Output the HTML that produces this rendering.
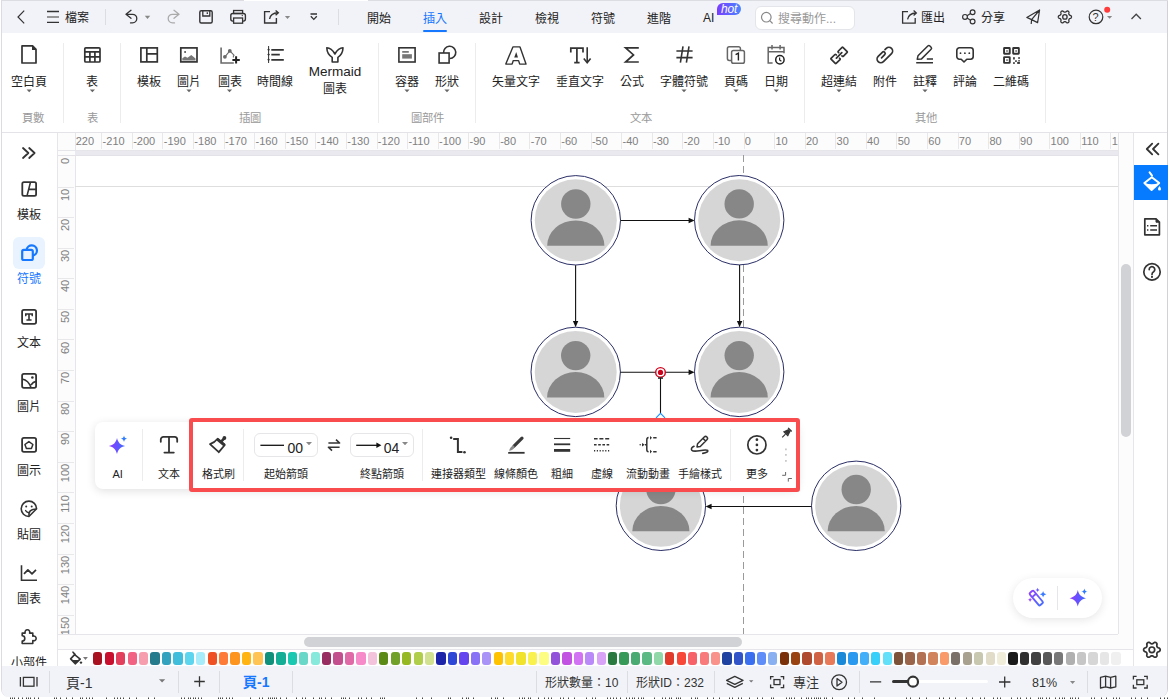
<!DOCTYPE html><html lang="zh-TW"><head><meta charset="utf-8"><style>
*{box-sizing:border-box;}
html,body{margin:0;padding:0;}
body{width:1169px;height:699px;overflow:hidden;position:relative;background:#fff;font-family:"Liberation Sans",sans-serif;color:#333;font-size:12px;}
.a{position:absolute;}
.t{position:absolute;white-space:nowrap;line-height:14px;text-align:center;width:120px;}
.l{position:absolute;white-space:nowrap;line-height:14px;}
svg.s{position:absolute;left:0;top:0;overflow:visible;}
</style></head><body>
<svg class="s" width="1169" height="699"><path d="M10 697.6h1v1.4h-1zM12 697.6h1v1.4h-1zM14 697.6h1v1.4h-1zM18 697.6h1v1.4h-1zM22 697.6h1v1.4h-1zM26 697.6h1v1.4h-1zM28 697.6h1v1.4h-1zM30 697.6h1v1.4h-1zM34 697.6h1v1.4h-1zM38 697.6h1v1.4h-1zM54 697.6h1v1.4h-1zM56 697.6h1v1.4h-1zM60 697.6h1v1.4h-1zM66 697.6h1v1.4h-1zM72 697.6h1v1.4h-1zM80 697.6h1v1.4h-1zM82 697.6h1v1.4h-1zM86 697.6h1v1.4h-1zM89 697.6h1v1.4h-1zM92 697.6h1v1.4h-1zM106 697.6h1v1.4h-1zM114 697.6h1v1.4h-1zM117 697.6h1v1.4h-1zM120 697.6h1v1.4h-1zM123 697.6h1v1.4h-1zM129 697.6h1v1.4h-1zM136 697.6h1v1.4h-1zM148 697.6h1v1.4h-1zM154 697.6h1v1.4h-1zM181 697.6h1v1.4h-1zM184 697.6h1v1.4h-1zM188 697.6h1v1.4h-1zM190 697.6h1v1.4h-1zM193 697.6h1v1.4h-1zM195 697.6h1v1.4h-1zM198 697.6h1v1.4h-1zM201 697.6h1v1.4h-1zM218 697.6h1v1.4h-1zM220 697.6h1v1.4h-1zM222 697.6h1v1.4h-1zM226 697.6h1v1.4h-1zM229 697.6h1v1.4h-1zM232 697.6h1v1.4h-1zM250 697.6h1v1.4h-1zM259 697.6h1v1.4h-1zM262 697.6h1v1.4h-1zM268 697.6h1v1.4h-1zM270 697.6h1v1.4h-1zM272 697.6h1v1.4h-1zM274 697.6h1v1.4h-1zM276 697.6h1v1.4h-1zM280 697.6h1v1.4h-1zM286 697.6h1v1.4h-1zM296 697.6h1v1.4h-1zM302 697.6h1v1.4h-1zM305 697.6h1v1.4h-1zM313 697.6h1v1.4h-1zM319 697.6h1v1.4h-1zM321 697.6h1v1.4h-1zM325 697.6h1v1.4h-1zM331 697.6h1v1.4h-1zM341 697.6h1v1.4h-1zM343 697.6h1v1.4h-1zM345 697.6h1v1.4h-1zM349 697.6h1v1.4h-1zM358 697.6h1v1.4h-1zM361 697.6h1v1.4h-1zM366 697.6h1v1.4h-1zM371 697.6h1v1.4h-1zM380 697.6h1v1.4h-1zM382 697.6h1v1.4h-1zM384 697.6h1v1.4h-1zM416 697.6h1v1.4h-1zM422 697.6h1v1.4h-1zM431 697.6h1v1.4h-1zM448 697.6h1v1.4h-1zM450 697.6h1v1.4h-1zM462 697.6h1v1.4h-1zM466 697.6h1v1.4h-1zM468 697.6h1v1.4h-1zM473 697.6h1v1.4h-1zM491 697.6h1v1.4h-1zM495 697.6h1v1.4h-1zM497 697.6h1v1.4h-1zM503 697.6h1v1.4h-1zM519 697.6h1v1.4h-1zM522 697.6h1v1.4h-1zM524 697.6h1v1.4h-1zM528 697.6h1v1.4h-1zM530 697.6h1v1.4h-1zM538 697.6h1v1.4h-1zM544 697.6h1v1.4h-1zM548 697.6h1v1.4h-1zM551 697.6h1v1.4h-1zM560 697.6h1v1.4h-1zM563 697.6h1v1.4h-1zM568 697.6h1v1.4h-1zM574 697.6h1v1.4h-1zM586 697.6h1v1.4h-1zM592 697.6h1v1.4h-1zM595 697.6h1v1.4h-1zM607 697.6h1v1.4h-1zM610 697.6h1v1.4h-1zM613 697.6h1v1.4h-1zM616 697.6h1v1.4h-1zM620 697.6h1v1.4h-1zM626 697.6h1v1.4h-1zM629 697.6h1v1.4h-1zM632 697.6h1v1.4h-1zM634 697.6h1v1.4h-1zM638 697.6h1v1.4h-1zM641 697.6h1v1.4h-1zM643 697.6h1v1.4h-1zM654 697.6h1v1.4h-1zM662 697.6h1v1.4h-1zM665 697.6h1v1.4h-1zM669 697.6h1v1.4h-1zM671 697.6h1v1.4h-1zM676 697.6h1v1.4h-1zM678 697.6h1v1.4h-1zM680 697.6h1v1.4h-1zM691 697.6h1v1.4h-1zM695 697.6h1v1.4h-1zM697 697.6h1v1.4h-1zM707 697.6h1v1.4h-1zM713 697.6h1v1.4h-1zM719 697.6h1v1.4h-1zM729 697.6h1v1.4h-1zM732 697.6h1v1.4h-1zM738 697.6h1v1.4h-1zM741 697.6h1v1.4h-1zM749 697.6h1v1.4h-1zM757 697.6h1v1.4h-1zM762 697.6h1v1.4h-1zM771 697.6h1v1.4h-1zM773 697.6h1v1.4h-1zM786 697.6h1v1.4h-1zM789 697.6h1v1.4h-1zM791 697.6h1v1.4h-1zM794 697.6h1v1.4h-1zM801 697.6h1v1.4h-1zM806 697.6h1v1.4h-1zM808 697.6h1v1.4h-1zM811 697.6h1v1.4h-1zM814 697.6h1v1.4h-1zM816 697.6h1v1.4h-1zM818 697.6h1v1.4h-1zM820 697.6h1v1.4h-1zM824 697.6h1v1.4h-1zM826 697.6h1v1.4h-1zM832 697.6h1v1.4h-1zM848 697.6h1v1.4h-1zM854 697.6h1v1.4h-1zM862 697.6h1v1.4h-1zM874 697.6h1v1.4h-1zM906 697.6h1v1.4h-1zM910 697.6h1v1.4h-1zM919 697.6h1v1.4h-1zM926 697.6h1v1.4h-1zM939 697.6h1v1.4h-1zM943 697.6h1v1.4h-1zM949 697.6h1v1.4h-1zM955 697.6h1v1.4h-1zM966 697.6h1v1.4h-1zM972 697.6h1v1.4h-1zM980 697.6h1v1.4h-1zM984 697.6h1v1.4h-1zM993 697.6h1v1.4h-1zM997 697.6h1v1.4h-1zM1000 697.6h1v1.4h-1zM1011 697.6h1v1.4h-1zM1017 697.6h1v1.4h-1zM1020 697.6h1v1.4h-1zM1026 697.6h1v1.4h-1zM1030 697.6h1v1.4h-1zM1038 697.6h1v1.4h-1zM1040 697.6h1v1.4h-1zM1042 697.6h1v1.4h-1zM1046 697.6h1v1.4h-1zM1049 697.6h1v1.4h-1zM1055 697.6h1v1.4h-1zM1059 697.6h1v1.4h-1zM1062 697.6h1v1.4h-1zM1064 697.6h1v1.4h-1zM1070 697.6h1v1.4h-1zM1072 697.6h1v1.4h-1zM1075 697.6h1v1.4h-1zM1078 697.6h1v1.4h-1zM1091 697.6h1v1.4h-1zM1094 697.6h1v1.4h-1zM1101 697.6h1v1.4h-1zM1106 697.6h1v1.4h-1zM1113 697.6h1v1.4h-1zM1116 697.6h1v1.4h-1zM1119 697.6h1v1.4h-1zM1131 697.6h1v1.4h-1zM1135 697.6h1v1.4h-1zM1141 697.6h1v1.4h-1zM1147 697.6h1v1.4h-1zM1160 697.6h1v1.4h-1zM1164 697.6h1v1.4h-1zM1167 697.6h1v1.4h-1z" fill="#444"/></svg>
<div class="a" style="left:1px;top:0;width:1167px;height:697px;background:#fff;border-radius:0 0 8px 8px;border-left:1px solid #dcdce0;border-right:1px solid #d2d2d6;"></div>
<div class="a" style="left:1px;top:0px;width:243px;height:1px;background:#dcdde2;"></div>
<div class="a" style="left:368px;top:0px;width:800px;height:1px;background:#dcdde2;"></div>
<div class="a" style="left:2px;top:1px;width:1165px;height:32px;background:#f2f3f8;"></div>
<div class="a" style="left:2px;top:132px;width:1165px;height:1px;background:#e4e4e8;"></div>
<div class="l" style="left:65.00px;top:11.00px;font-size:12px;color:#222;font-weight:normal;">檔案</div>
<div class="a" style="left:105px;top:9px;width:1px;height:16px;background:#dcdde2;"></div>
<div class="a" style="left:338px;top:9px;width:1px;height:16px;background:#dcdde2;"></div>
<div class="t" style="left:319.20px;top:11.80px;font-size:12px;color:#222;font-weight:normal;">開始</div>
<div class="t" style="left:375.00px;top:11.80px;font-size:12px;color:#1677ff;font-weight:normal;">插入</div>
<div class="t" style="left:430.80px;top:11.80px;font-size:12px;color:#222;font-weight:normal;">設計</div>
<div class="t" style="left:486.50px;top:11.80px;font-size:12px;color:#222;font-weight:normal;">檢視</div>
<div class="t" style="left:543.00px;top:11.80px;font-size:12px;color:#222;font-weight:normal;">符號</div>
<div class="t" style="left:598.70px;top:11.80px;font-size:12px;color:#222;font-weight:normal;">進階</div>
<div class="a" style="left:423px;top:30px;width:24px;height:2px;background:#1677ff;border-radius:1px;"></div>
<div class="l" style="left:703.00px;top:10.90px;font-size:12px;color:#222;font-weight:normal;">AI</div>
<div class="a" style="left:717px;top:2.8px;width:24.2px;height:12.2px;border-radius:6px 6px 6px 0;background:linear-gradient(90deg,#7a3cff,#4a86ff);color:#fff;font-size:12px;line-height:12px;font-style:italic;text-align:center;letter-spacing:-0.2px;">hot</div>
<div class="a" style="left:755px;top:6px;width:100px;height:24px;border:1px solid #e4e5ea;border-radius:6px;background:#fff;"></div>
<div class="l" style="left:778.00px;top:12.30px;font-size:12px;color:#999;font-weight:normal;">搜尋動作...</div>
<div class="l" style="left:921.00px;top:11.40px;font-size:12px;color:#222;font-weight:normal;">匯出</div>
<div class="l" style="left:981.00px;top:11.40px;font-size:12px;color:#222;font-weight:normal;">分享</div>
<div class="l" style="left:1092.60px;top:10.40px;font-size:11px;color:#333;font-weight:normal;">?</div>
<div class="t" style="left:-30.80px;top:74.50px;font-size:12px;color:#222;font-weight:normal;">空白頁</div>
<div class="t" style="left:32.40px;top:74.50px;font-size:12px;color:#222;font-weight:normal;">表</div>
<div class="t" style="left:89.00px;top:74.50px;font-size:12px;color:#222;font-weight:normal;">模板</div>
<div class="t" style="left:129.00px;top:74.50px;font-size:12px;color:#222;font-weight:normal;">圖片</div>
<div class="t" style="left:169.50px;top:74.50px;font-size:12px;color:#222;font-weight:normal;">圖表</div>
<div class="t" style="left:215.00px;top:74.50px;font-size:12px;color:#222;font-weight:normal;">時間線</div>
<div class="t" style="left:347.00px;top:74.50px;font-size:12px;color:#222;font-weight:normal;">容器</div>
<div class="t" style="left:387.00px;top:74.50px;font-size:12px;color:#222;font-weight:normal;">形狀</div>
<div class="t" style="left:456.00px;top:74.50px;font-size:12px;color:#222;font-weight:normal;">矢量文字</div>
<div class="t" style="left:520.00px;top:74.50px;font-size:12px;color:#222;font-weight:normal;">垂直文字</div>
<div class="t" style="left:572.00px;top:74.50px;font-size:12px;color:#222;font-weight:normal;">公式</div>
<div class="t" style="left:624.00px;top:74.50px;font-size:12px;color:#222;font-weight:normal;">字體符號</div>
<div class="t" style="left:676.00px;top:74.50px;font-size:12px;color:#222;font-weight:normal;">頁碼</div>
<div class="t" style="left:716.30px;top:74.50px;font-size:12px;color:#222;font-weight:normal;">日期</div>
<div class="t" style="left:779.00px;top:74.50px;font-size:12px;color:#222;font-weight:normal;">超連結</div>
<div class="t" style="left:825.00px;top:74.50px;font-size:12px;color:#222;font-weight:normal;">附件</div>
<div class="t" style="left:865.00px;top:74.50px;font-size:12px;color:#222;font-weight:normal;">註釋</div>
<div class="t" style="left:905.00px;top:74.50px;font-size:12px;color:#222;font-weight:normal;">評論</div>
<div class="t" style="left:951.00px;top:74.50px;font-size:12px;color:#222;font-weight:normal;">二維碼</div>
<div class="t" style="left:275.00px;top:64.50px;font-size:13.5px;color:#222;font-weight:normal;">Mermaid</div>
<div class="t" style="left:275.00px;top:81.50px;font-size:12px;color:#222;font-weight:normal;">圖表</div>
<div class="t" style="left:-27.20px;top:111.00px;font-size:11.3px;color:#999;font-weight:normal;">頁數</div>
<div class="t" style="left:32.40px;top:111.00px;font-size:11.3px;color:#999;font-weight:normal;">表</div>
<div class="t" style="left:190.00px;top:111.00px;font-size:11.3px;color:#999;font-weight:normal;">插圖</div>
<div class="t" style="left:367.50px;top:111.00px;font-size:11.3px;color:#999;font-weight:normal;">圖部件</div>
<div class="t" style="left:581.00px;top:111.00px;font-size:11.3px;color:#999;font-weight:normal;">文本</div>
<div class="t" style="left:866.00px;top:111.00px;font-size:11.3px;color:#999;font-weight:normal;">其他</div>
<div class="a" style="left:63px;top:43px;width:1px;height:80px;background:#ececec;"></div>
<div class="a" style="left:120px;top:43px;width:1px;height:80px;background:#ececec;"></div>
<div class="a" style="left:378px;top:43px;width:1px;height:80px;background:#ececec;"></div>
<div class="a" style="left:475px;top:43px;width:1px;height:80px;background:#ececec;"></div>
<div class="a" style="left:804px;top:43px;width:1px;height:80px;background:#ececec;"></div>
<div class="a" style="left:1045px;top:43px;width:1px;height:80px;background:#ececec;"></div>
<div class="a" style="left:57px;top:133px;width:1px;height:533px;background:#e6e6ea;"></div>
<div class="a" style="left:13px;top:237px;width:32px;height:32px;border-radius:6px;background:#e8f3ff;"></div>
<div class="t" style="left:-31.00px;top:207.50px;font-size:12px;color:#222;font-weight:normal;">模板</div>
<div class="t" style="left:-31.00px;top:271.50px;font-size:12px;color:#1677ff;font-weight:normal;">符號</div>
<div class="t" style="left:-31.00px;top:335.50px;font-size:12px;color:#222;font-weight:normal;">文本</div>
<div class="t" style="left:-31.00px;top:399.50px;font-size:12px;color:#222;font-weight:normal;">圖片</div>
<div class="t" style="left:-31.00px;top:463.50px;font-size:12px;color:#222;font-weight:normal;">圖示</div>
<div class="t" style="left:-31.00px;top:527.50px;font-size:12px;color:#222;font-weight:normal;">貼圖</div>
<div class="t" style="left:-31.00px;top:591.50px;font-size:12px;color:#222;font-weight:normal;">圖表</div>
<div class="t" style="left:-31.00px;top:655.50px;font-size:12px;color:#222;font-weight:normal;">小部件</div>
<div class="a" style="left:58px;top:133px;width:1060px;height:17px;background:#fcfcfd;"></div>
<div class="a" style="left:58px;top:151px;width:1060px;height:4px;background:#e9e9ef;"></div>
<div class="a" style="left:58px;top:155px;width:17px;height:479px;background:#fcfcfd;"></div>
<div class="a" style="left:58px;top:133px;width:17px;height:22px;background:#fcfcfd;"></div>
<div class="a" style="left:58px;top:150px;width:1060px;height:1px;background:#e6e6ea;"></div>
<div class="a" style="left:75px;top:155px;width:1px;height:479px;background:#e6e6ea;"></div>
<div class="a" style="left:58px;top:155px;width:1060px;height:1px;background:#e2e2e8;"></div>
<div class="l" style="left:72.04px;top:134px;font-size:11px;color:#808080;">-220</div>
<div class="a" style="left:101px;top:133px;width:1px;height:16px;background:#e8e8ea;"></div>
<div class="l" style="left:102.62px;top:134px;font-size:11px;color:#808080;">-210</div>
<div class="a" style="left:132px;top:133px;width:1px;height:16px;background:#e8e8ea;"></div>
<div class="l" style="left:133.20px;top:134px;font-size:11px;color:#808080;">-200</div>
<div class="a" style="left:162px;top:133px;width:1px;height:16px;background:#e8e8ea;"></div>
<div class="l" style="left:163.78px;top:134px;font-size:11px;color:#808080;">-190</div>
<div class="a" style="left:193px;top:133px;width:1px;height:16px;background:#e8e8ea;"></div>
<div class="l" style="left:194.36px;top:134px;font-size:11px;color:#808080;">-180</div>
<div class="a" style="left:224px;top:133px;width:1px;height:16px;background:#e8e8ea;"></div>
<div class="l" style="left:224.94px;top:134px;font-size:11px;color:#808080;">-170</div>
<div class="a" style="left:254px;top:133px;width:1px;height:16px;background:#e8e8ea;"></div>
<div class="l" style="left:255.52px;top:134px;font-size:11px;color:#808080;">-160</div>
<div class="a" style="left:285px;top:133px;width:1px;height:16px;background:#e8e8ea;"></div>
<div class="l" style="left:286.10px;top:134px;font-size:11px;color:#808080;">-150</div>
<div class="a" style="left:315px;top:133px;width:1px;height:16px;background:#e8e8ea;"></div>
<div class="l" style="left:316.68px;top:134px;font-size:11px;color:#808080;">-140</div>
<div class="a" style="left:346px;top:133px;width:1px;height:16px;background:#e8e8ea;"></div>
<div class="l" style="left:347.26px;top:134px;font-size:11px;color:#808080;">-130</div>
<div class="a" style="left:377px;top:133px;width:1px;height:16px;background:#e8e8ea;"></div>
<div class="l" style="left:377.84px;top:134px;font-size:11px;color:#808080;">-120</div>
<div class="a" style="left:407px;top:133px;width:1px;height:16px;background:#e8e8ea;"></div>
<div class="l" style="left:408.42px;top:134px;font-size:11px;color:#808080;">-110</div>
<div class="a" style="left:438px;top:133px;width:1px;height:16px;background:#e8e8ea;"></div>
<div class="l" style="left:439.00px;top:134px;font-size:11px;color:#808080;">-100</div>
<div class="a" style="left:468px;top:133px;width:1px;height:16px;background:#e8e8ea;"></div>
<div class="l" style="left:469.58px;top:134px;font-size:11px;color:#808080;">-90</div>
<div class="a" style="left:499px;top:133px;width:1px;height:16px;background:#e8e8ea;"></div>
<div class="l" style="left:500.16px;top:134px;font-size:11px;color:#808080;">-80</div>
<div class="a" style="left:529px;top:133px;width:1px;height:16px;background:#e8e8ea;"></div>
<div class="l" style="left:530.74px;top:134px;font-size:11px;color:#808080;">-70</div>
<div class="a" style="left:560px;top:133px;width:1px;height:16px;background:#e8e8ea;"></div>
<div class="l" style="left:561.32px;top:134px;font-size:11px;color:#808080;">-60</div>
<div class="a" style="left:591px;top:133px;width:1px;height:16px;background:#e8e8ea;"></div>
<div class="l" style="left:591.90px;top:134px;font-size:11px;color:#808080;">-50</div>
<div class="a" style="left:621px;top:133px;width:1px;height:16px;background:#e8e8ea;"></div>
<div class="l" style="left:622.48px;top:134px;font-size:11px;color:#808080;">-40</div>
<div class="a" style="left:652px;top:133px;width:1px;height:16px;background:#e8e8ea;"></div>
<div class="l" style="left:653.06px;top:134px;font-size:11px;color:#808080;">-30</div>
<div class="a" style="left:682px;top:133px;width:1px;height:16px;background:#e8e8ea;"></div>
<div class="l" style="left:683.64px;top:134px;font-size:11px;color:#808080;">-20</div>
<div class="a" style="left:713px;top:133px;width:1px;height:16px;background:#e8e8ea;"></div>
<div class="l" style="left:714.22px;top:134px;font-size:11px;color:#808080;">-10</div>
<div class="a" style="left:744px;top:133px;width:1px;height:16px;background:#e8e8ea;"></div>
<div class="l" style="left:744.80px;top:134px;font-size:11px;color:#808080;">0</div>
<div class="a" style="left:774px;top:133px;width:1px;height:16px;background:#e8e8ea;"></div>
<div class="l" style="left:775.38px;top:134px;font-size:11px;color:#808080;">10</div>
<div class="a" style="left:805px;top:133px;width:1px;height:16px;background:#e8e8ea;"></div>
<div class="l" style="left:805.96px;top:134px;font-size:11px;color:#808080;">20</div>
<div class="a" style="left:835px;top:133px;width:1px;height:16px;background:#e8e8ea;"></div>
<div class="l" style="left:836.54px;top:134px;font-size:11px;color:#808080;">30</div>
<div class="a" style="left:866px;top:133px;width:1px;height:16px;background:#e8e8ea;"></div>
<div class="l" style="left:867.12px;top:134px;font-size:11px;color:#808080;">40</div>
<div class="a" style="left:896px;top:133px;width:1px;height:16px;background:#e8e8ea;"></div>
<div class="l" style="left:897.70px;top:134px;font-size:11px;color:#808080;">50</div>
<div class="a" style="left:927px;top:133px;width:1px;height:16px;background:#e8e8ea;"></div>
<div class="l" style="left:928.28px;top:134px;font-size:11px;color:#808080;">60</div>
<div class="a" style="left:958px;top:133px;width:1px;height:16px;background:#e8e8ea;"></div>
<div class="l" style="left:958.86px;top:134px;font-size:11px;color:#808080;">70</div>
<div class="a" style="left:988px;top:133px;width:1px;height:16px;background:#e8e8ea;"></div>
<div class="l" style="left:989.44px;top:134px;font-size:11px;color:#808080;">80</div>
<div class="a" style="left:1019px;top:133px;width:1px;height:16px;background:#e8e8ea;"></div>
<div class="l" style="left:1020.02px;top:134px;font-size:11px;color:#808080;">90</div>
<div class="a" style="left:1049px;top:133px;width:1px;height:16px;background:#e8e8ea;"></div>
<div class="l" style="left:1050.60px;top:134px;font-size:11px;color:#808080;">100</div>
<div class="a" style="left:1080px;top:133px;width:1px;height:16px;background:#e8e8ea;"></div>
<div class="l" style="left:1081.18px;top:134px;font-size:11px;color:#808080;">110</div>
<div class="a" style="left:1110px;top:133px;width:1px;height:16px;background:#e8e8ea;"></div>
<div class="l" style="left:1111.76px;top:134px;font-size:11px;color:#808080;">120</div>
<div class="a" style="left:58px;top:133px;width:17px;height:17px;background:#fcfcfd;"></div>
<div class="a" style="left:75px;top:133px;width:1px;height:18px;background:#e6e6ea;"></div>
<div class="a" style="left:58px;top:150px;width:17px;height:1px;background:#e6e6ea;"></div>
<div class="l" style="left:61.95px;top:154.05px;width:6.1px;text-align:center;font-size:11px;color:#808080;transform:rotate(-90deg);">0</div>
<div class="a" style="left:58px;top:187px;width:16px;height:1px;background:#e8e8ea;"></div>
<div class="l" style="left:58.90px;top:187.68px;width:12.2px;text-align:center;font-size:11px;color:#808080;transform:rotate(-90deg);">10</div>
<div class="a" style="left:58px;top:217px;width:16px;height:1px;background:#e8e8ea;"></div>
<div class="l" style="left:58.90px;top:218.26px;width:12.2px;text-align:center;font-size:11px;color:#808080;transform:rotate(-90deg);">20</div>
<div class="a" style="left:58px;top:248px;width:16px;height:1px;background:#e8e8ea;"></div>
<div class="l" style="left:58.90px;top:248.84px;width:12.2px;text-align:center;font-size:11px;color:#808080;transform:rotate(-90deg);">30</div>
<div class="a" style="left:58px;top:278px;width:16px;height:1px;background:#e8e8ea;"></div>
<div class="l" style="left:58.90px;top:279.42px;width:12.2px;text-align:center;font-size:11px;color:#808080;transform:rotate(-90deg);">40</div>
<div class="a" style="left:58px;top:309px;width:16px;height:1px;background:#e8e8ea;"></div>
<div class="l" style="left:58.90px;top:310.00px;width:12.2px;text-align:center;font-size:11px;color:#808080;transform:rotate(-90deg);">50</div>
<div class="a" style="left:58px;top:339px;width:16px;height:1px;background:#e8e8ea;"></div>
<div class="l" style="left:58.90px;top:340.58px;width:12.2px;text-align:center;font-size:11px;color:#808080;transform:rotate(-90deg);">60</div>
<div class="a" style="left:58px;top:370px;width:16px;height:1px;background:#e8e8ea;"></div>
<div class="l" style="left:58.90px;top:371.16px;width:12.2px;text-align:center;font-size:11px;color:#808080;transform:rotate(-90deg);">70</div>
<div class="a" style="left:58px;top:401px;width:16px;height:1px;background:#e8e8ea;"></div>
<div class="l" style="left:58.90px;top:401.74px;width:12.2px;text-align:center;font-size:11px;color:#808080;transform:rotate(-90deg);">80</div>
<div class="a" style="left:58px;top:431px;width:16px;height:1px;background:#e8e8ea;"></div>
<div class="l" style="left:58.90px;top:432.32px;width:12.2px;text-align:center;font-size:11px;color:#808080;transform:rotate(-90deg);">90</div>
<div class="a" style="left:58px;top:462px;width:16px;height:1px;background:#e8e8ea;"></div>
<div class="l" style="left:55.85px;top:465.95px;width:18.3px;text-align:center;font-size:11px;color:#808080;transform:rotate(-90deg);">100</div>
<div class="a" style="left:58px;top:492px;width:16px;height:1px;background:#e8e8ea;"></div>
<div class="l" style="left:55.85px;top:496.53px;width:18.3px;text-align:center;font-size:11px;color:#808080;transform:rotate(-90deg);">110</div>
<div class="a" style="left:58px;top:523px;width:16px;height:1px;background:#e8e8ea;"></div>
<div class="l" style="left:55.85px;top:527.11px;width:18.3px;text-align:center;font-size:11px;color:#808080;transform:rotate(-90deg);">120</div>
<div class="a" style="left:58px;top:554px;width:16px;height:1px;background:#e8e8ea;"></div>
<div class="l" style="left:55.85px;top:557.69px;width:18.3px;text-align:center;font-size:11px;color:#808080;transform:rotate(-90deg);">130</div>
<div class="a" style="left:58px;top:584px;width:16px;height:1px;background:#e8e8ea;"></div>
<div class="l" style="left:55.85px;top:588.27px;width:18.3px;text-align:center;font-size:11px;color:#808080;transform:rotate(-90deg);">140</div>
<div class="a" style="left:58px;top:615px;width:16px;height:1px;background:#e8e8ea;"></div>
<div class="l" style="left:55.85px;top:618.85px;width:18.3px;text-align:center;font-size:11px;color:#808080;transform:rotate(-90deg);">150</div>
<div class="a" style="left:58px;top:634px;width:1060px;height:1px;background:#e6e6ea;"></div>
<div class="a" style="left:58px;top:635px;width:1060px;height:14px;background:#fcfcfd;"></div>
<div class="a" style="left:58px;top:649px;width:1075px;height:1px;background:#e6e6ea;"></div>
<div class="a" style="left:57px;top:634px;width:1px;height:32px;background:#e6e6ea;"></div>
<div class="a" style="left:304px;top:637px;width:438px;height:10px;border-radius:5px;background:#d1d2d5;"></div>
<div class="a" style="left:1118px;top:133px;width:15px;height:516px;background:#fcfcfd;"></div>
<div class="a" style="left:1118px;top:133px;width:1px;height:501px;background:#e6e6ea;"></div>
<div class="a" style="left:1121px;top:263.5px;width:10px;height:173px;border-radius:5px;background:#d1d2d5;"></div>
<div class="a" style="left:75px;top:186px;width:1043px;height:1px;background:#dedede;"></div>
<div class="a" style="left:743px;top:155px;width:1px;height:479px;background:repeating-linear-gradient(180deg,#9a9a9a 0 7px,transparent 7px 11px);"></div>
<svg class="s" width="1169" height="699"><path d="M24.2 10.6 L18 17 L24.2 23.4" fill="none" stroke="#333" stroke-width="1.2"/><path d="M47 11.5H59M47 22.4H59" fill="none" stroke="#333" stroke-width="1.3"/><path d="M47 17H59" stroke="#777" stroke-width="1.5"/><path d="M126 14.3 L131 10.3 M126 14.3 L131 18.3 M126 14.3 H132.5 A4.3 4.3 0 0 1 132.5 22.9 H130.5" fill="none" stroke="#333" stroke-width="1.3" stroke-linecap="round" stroke-linejoin="round"/><path d="M144.8 15.8 H150.2 L147.5 18.9Z" fill="#888"/><path d="M179 14.3 L174 10.3 M179 14.3 L174 18.3 M179 14.3 H172.5 A4.3 4.3 0 0 0 172.5 22.9 H174.5" fill="none" stroke="#aaa" stroke-width="1.3" stroke-linecap="round" stroke-linejoin="round"/><rect x="199.8" y="10.8" width="12.4" height="12.2" rx="1.5" fill="none" stroke="#333" stroke-width="1.4"/><path d="M202.8 10.8 V16 H209.8 V10.8 M207.3 12.3 V14" fill="none" stroke="#333" stroke-width="1.3"/><rect x="230.8" y="13.5" width="14.6" height="7.6" rx="2" fill="none" stroke="#333" stroke-width="1.4"/><rect x="233.6" y="10.5" width="9" height="3" fill="none" stroke="#333" stroke-width="1.3"/><rect x="233.6" y="18" width="9" height="5.2" fill="#f2f3f8" stroke="#333" stroke-width="1.3"/><circle cx="242.3" cy="15.6" r="0.7" fill="#333"/><path d="M270 11.6 H264.6 V23 H276.4 V18" fill="none" stroke="#333" stroke-width="1.4"/><path d="M269.6 19 Q270.5 13.2 278 12.8" fill="none" stroke="#333" stroke-width="1.4"/><path d="M275.6 10.4 L278.3 12.8 L275.6 15.2" fill="none" stroke="#333" stroke-width="1.4"/><path d="M284.9 16 H290.1 L287.5 18.9Z" fill="#888"/><path d="M310.5 14H317M310.8 16.3 L313.8 19.4 L316.8 16.3" fill="none" stroke="#333" stroke-width="1.3"/><circle cx="766.3" cy="17.2" r="4.8" fill="none" stroke="#888" stroke-width="1.2"/><path d="M769.8 20.7 L772.6 23.5" stroke="#888" stroke-width="1.2"/><path d="M908 11.6 H902.6 V23.2 H915.2 V18" fill="none" stroke="#333" stroke-width="1.3"/><path d="M907.6 19.4 Q908.5 13.4 916 13" fill="none" stroke="#333" stroke-width="1.3"/><path d="M913.6 10.6 L916.3 13 L913.6 15.4" fill="none" stroke="#333" stroke-width="1.3"/><circle cx="965" cy="16.9" r="2.4" fill="none" stroke="#333" stroke-width="1.2"/><circle cx="972.6" cy="12.3" r="2.4" fill="none" stroke="#333" stroke-width="1.2"/><circle cx="972.6" cy="21.5" r="2.4" fill="none" stroke="#333" stroke-width="1.2"/><path d="M967.1 15.7 L970.5 13.6 M967.1 18.1 L970.5 20.2" stroke="#333" stroke-width="1.2"/><path d="M1026.8 17.4 L1039.6 10 L1037.6 22.6 L1031.6 19.6 Z M1031.6 19.6 L1031.2 24 M1031.6 19.6 L1039.6 10" fill="none" stroke="#333" stroke-width="1.2" stroke-linejoin="round"/><path d="M1071.50 16.90 L1071.47 17.19 L1071.39 17.47 L1071.25 17.74 L1071.05 17.98 L1070.79 18.21 L1070.38 18.37 L1069.97 18.50 L1069.70 18.65 L1069.47 18.79 L1069.29 18.95 L1069.13 19.10 L1069.02 19.28 L1068.93 19.47 L1068.87 19.68 L1068.83 19.91 L1068.81 20.18 L1068.82 20.49 L1068.91 20.91 L1068.98 21.35 L1068.91 21.68 L1068.80 21.98 L1068.63 22.23 L1068.43 22.45 L1068.20 22.62 L1067.94 22.73 L1067.65 22.80 L1067.35 22.81 L1067.04 22.77 L1066.71 22.66 L1066.37 22.38 L1066.05 22.09 L1065.79 21.93 L1065.55 21.81 L1065.32 21.72 L1065.11 21.67 L1064.90 21.65 L1064.69 21.67 L1064.48 21.72 L1064.25 21.81 L1064.01 21.93 L1063.75 22.09 L1063.43 22.38 L1063.09 22.66 L1062.76 22.77 L1062.45 22.81 L1062.15 22.80 L1061.86 22.73 L1061.60 22.62 L1061.37 22.45 L1061.17 22.23 L1061.00 21.98 L1060.89 21.68 L1060.82 21.35 L1060.89 20.91 L1060.98 20.49 L1060.99 20.18 L1060.97 19.91 L1060.93 19.68 L1060.87 19.47 L1060.78 19.28 L1060.67 19.10 L1060.51 18.95 L1060.33 18.79 L1060.10 18.65 L1059.83 18.50 L1059.42 18.37 L1059.01 18.21 L1058.75 17.98 L1058.55 17.74 L1058.41 17.47 L1058.33 17.19 L1058.30 16.90 L1058.33 16.61 L1058.41 16.33 L1058.55 16.06 L1058.75 15.82 L1059.01 15.59 L1059.42 15.43 L1059.83 15.30 L1060.10 15.15 L1060.33 15.01 L1060.51 14.85 L1060.67 14.70 L1060.78 14.52 L1060.87 14.33 L1060.93 14.12 L1060.97 13.89 L1060.99 13.62 L1060.98 13.31 L1060.89 12.89 L1060.82 12.45 L1060.89 12.12 L1061.00 11.82 L1061.17 11.57 L1061.37 11.35 L1061.60 11.18 L1061.86 11.07 L1062.15 11.00 L1062.45 10.99 L1062.76 11.03 L1063.09 11.14 L1063.43 11.42 L1063.75 11.71 L1064.01 11.87 L1064.25 11.99 L1064.48 12.08 L1064.69 12.13 L1064.90 12.15 L1065.11 12.13 L1065.32 12.08 L1065.55 11.99 L1065.79 11.87 L1066.05 11.71 L1066.37 11.42 L1066.71 11.14 L1067.04 11.03 L1067.35 10.99 L1067.65 11.00 L1067.94 11.07 L1068.20 11.18 L1068.43 11.35 L1068.63 11.57 L1068.80 11.82 L1068.91 12.12 L1068.98 12.45 L1068.91 12.89 L1068.82 13.31 L1068.81 13.62 L1068.83 13.89 L1068.87 14.12 L1068.93 14.33 L1069.02 14.52 L1069.13 14.70 L1069.29 14.85 L1069.47 15.01 L1069.70 15.15 L1069.97 15.30 L1070.38 15.43 L1070.79 15.59 L1071.05 15.82 L1071.25 16.06 L1071.39 16.33 L1071.47 16.61Z" fill="none" stroke="#333" stroke-width="1.3" stroke-linejoin="round"/><circle cx="1064.9" cy="16.9" r="2.2" fill="none" stroke="#333" stroke-width="1.3"/><circle cx="1096" cy="16.9" r="6.8" fill="none" stroke="#333" stroke-width="1.2"/><circle cx="1107.2" cy="9.8" r="3" fill="#ff3b3b"/><path d="M1107 16 H1112.2 L1109.6 18.8Z" fill="#888"/><path d="M1131.5 19 L1136.2 14.2 L1140.9 19" fill="none" stroke="#444" stroke-width="1.3"/><path d="M26.60 89.4 H31.80 L29.20 92.2Z" fill="#666"/><path d="M89.80 89.4 H95.00 L92.40 92.2Z" fill="#666"/><path d="M186.40 89.4 H191.60 L189.00 92.2Z" fill="#666"/><path d="M226.90 89.4 H232.10 L229.50 92.2Z" fill="#666"/><path d="M404.40 89.4 H409.60 L407.00 92.2Z" fill="#666"/><path d="M444.40 89.4 H449.60 L447.00 92.2Z" fill="#666"/><path d="M681.40 89.4 H686.60 L684.00 92.2Z" fill="#666"/><path d="M733.40 89.4 H738.60 L736.00 92.2Z" fill="#666"/><path d="M773.70 89.4 H778.90 L776.30 92.2Z" fill="#666"/><path d="M836.40 89.4 H841.60 L839.00 92.2Z" fill="#666"/><path d="M922.40 89.4 H927.60 L925.00 92.2Z" fill="#666"/><path d="M22 45.9 H32.6 L36 49.3 V63 H22 Z" fill="none" stroke="#333" stroke-width="1.7" stroke-linejoin="round"/><path d="M32.6 45.9 V49.3 H36" fill="#333" stroke="#333" stroke-width="1.2"/><rect x="84.8" y="47.8" width="15.2" height="14.2" rx="1" fill="none" stroke="#333" stroke-width="1.7"/><path d="M84.8 51.9 H100 M84.8 56.9 H100 M89.9 51.9 V62 M94.9 51.9 V62" stroke="#333" stroke-width="1.7"/><rect x="140.9" y="47.9" width="16.4" height="14" fill="none" stroke="#333" stroke-width="1.7"/><path d="M146.8 47.9 V61.9 M146.8 53.8 H157.3" stroke="#333" stroke-width="1.7"/><rect x="180.8" y="47.9" width="16.2" height="14" fill="none" stroke="#333" stroke-width="1.7"/><rect x="184.3" y="51.2" width="1.6" height="1.6" fill="#333"/><path d="M182.3 60.4 V58.2 L185 56.6 L187.5 57.8 L191.3 55 L195.5 58.4 V60.4 Z" fill="#777"/><path d="M221.1 47.6 V63 H233.8" fill="none" stroke="#6a6a6a" stroke-width="1.6"/><path d="M224.9 56.8 L229.8 50.9 L234.4 55.6 M233.4 55.6 V57.6" fill="none" stroke="#6a6a6a" stroke-width="1.1"/><circle cx="224.9" cy="56.8" r="1.9" fill="#6a6a6a"/><circle cx="229.8" cy="50.9" r="1.9" fill="#6a6a6a"/><path d="M236.1 56.2 V63.6 M232.4 59.9 H239.8" stroke="#222" stroke-width="2"/><path d="M268.6 46 V63" stroke="#333" stroke-width="1"/><path d="M268.6 48.3 L269.9 49.7 L268.6 51.1 L267.3 49.7Z M268.6 53.2 L269.9 54.6 L268.6 56 L267.3 54.6Z M268.6 58.3 L269.9 59.7 L268.6 61.1 L267.3 59.7Z" fill="#333"/><path d="M271.3 49.8 H283.8 M271.3 54.6 H279.8 M271.3 59.8 H283.8" stroke="#333" stroke-width="1.8"/><path d="M326.8 47.8 Q331.5 48 334.9 54 Q338.3 48 343 47.8 Q342.8 54.2 337.9 57.4 V62 H332.2 V57.4 Q327 54.2 326.8 47.8 Z" fill="none" stroke="#333" stroke-width="1.6" stroke-linejoin="round"/><rect x="398.9" y="47.8" width="16.2" height="14.2" fill="none" stroke="#333" stroke-width="1.6"/><rect x="402.2" y="51.1" width="6.6" height="1.6" fill="#6a6a6a"/><rect x="402.2" y="54.2" width="9.7" height="4.4" fill="#777"/><path d="M443.6 53 A6.1 6.1 0 1 1 449.9 58.5" fill="none" stroke="#333" stroke-width="1.6"/><rect x="439.1" y="53" width="10" height="10" fill="none" stroke="#333" stroke-width="1.6"/><path d="M505.8 64.1 L512.9 46.9 H520 L526 64.1 H519.7 L518.6 60.6 H513.3 L512.1 64.1 Z" fill="none" stroke="#333" stroke-width="1.4" stroke-linejoin="round"/><path d="M514.2 57.6 L516.2 52 L518 57.6Z" fill="#333"/><path d="M570.8 52.6 V48.2 H583 V52.6 M576.9 48.2 V62.6 M574.2 62.6 H579.6" fill="none" stroke="#333" stroke-width="1.7"/><path d="M587.2 47.3 V62" stroke="#333" stroke-width="1.6"/><path d="M583.8 58.6 L587.2 62.8 L590.6 58.6" fill="none" stroke="#333" stroke-width="1.6"/><path d="M638.8 47.9 H625.6 L633.5 54.9 L625.6 62 H638.8" fill="none" stroke="#333" stroke-width="1.7"/><path d="M676.4 51 H692.6 M676.4 57.6 H692.6 M683 46.4 L680.4 62.6 M689 46.4 L686.4 62.6" stroke="#333" stroke-width="1.6"/><path d="M731.4 60.4 H729.2 A1.8 1.8 0 0 1 727.4 58.6 V48.6 A1.8 1.8 0 0 1 729.2 46.8 H738.6 A1.8 1.8 0 0 1 740.4 48.6 V50.2" fill="none" stroke="#666" stroke-width="1.5"/><rect x="731.6" y="50.4" width="12.8" height="12.8" rx="1.8" fill="#fff" stroke="#666" stroke-width="1.5"/><path d="M735.6 54.6 L738.4 53.2 V60.6" fill="none" stroke="#222" stroke-width="1.4"/><path d="M772.6 63 H768.2 V47.6 H784 V53.2 M768.2 51.8 H784 M772 45 V49.4 M780.1 45 V49.4" fill="none" stroke="#666" stroke-width="1.5"/><circle cx="779.9" cy="59.7" r="4.2" fill="#fff" stroke="#222" stroke-width="1.5"/><path d="M779.6 57.6 V60 L781.4 61.2" fill="none" stroke="#222" stroke-width="1.2"/><g transform="translate(839.1 55.4) rotate(-45)" fill="none" stroke="#333" stroke-width="1.7" stroke-linecap="round"><path d="M-1.7 -2.3 V-3 A0.6 0.6 0 0 0 -2.3 -3.6 H-7.8 A0.6 0.6 0 0 0 -8.4 -3 V3 A0.6 0.6 0 0 0 -7.8 3.6 H-2.3 A0.6 0.6 0 0 0 -1.7 3 V2.3"/><path d="M1.7 2.3 V3 A0.6 0.6 0 0 0 2.3 3.6 H7.8 A0.6 0.6 0 0 0 8.4 3 V-3 A0.6 0.6 0 0 0 7.8 -3.6 H2.3 A0.6 0.6 0 0 0 1.7 -3 V-2.3"/><path d="M-3.8 0 H3.8" stroke-width="1.8"/></g><path transform="translate(885.3 55.3) rotate(-45) scale(1.06)" d="M3.6 -4 H5.3 A3.5 3.5 0 0 1 5.3 3 H-5.5 A3.5 3.5 0 0 1 -5.5 -4 H0 A1.6 1.6 0 0 1 0 -0.8 H-4.2" fill="none" stroke="#333" stroke-width="1.6" stroke-linecap="round"/><path d="M917.2 59.3 L918 55.8 L927.8 46 A1.5 1.5 0 0 1 929.9 46 L931.1 47.2 A1.5 1.5 0 0 1 931.1 49.3 L921.3 59.1 Z" fill="none" stroke="#333" stroke-width="1.5" stroke-linejoin="round"/><path d="M926.8 59 H933 M916.2 62.7 H933" stroke="#333" stroke-width="1.6"/><path d="M959.4 47.8 H970.6 A2.6 2.6 0 0 1 973.2 50.4 V56.6 A2.6 2.6 0 0 1 970.6 59.2 H966.8 L964 62 L961.2 59.2 H959.4 A2.6 2.6 0 0 1 956.8 56.6 V50.4 A2.6 2.6 0 0 1 959.4 47.8 Z" fill="none" stroke="#333" stroke-width="1.6" stroke-linejoin="round"/><circle cx="960.5" cy="53.2" r="0.9" fill="#333"/><circle cx="964.9" cy="53.2" r="0.9" fill="#333"/><circle cx="969.3" cy="53.2" r="0.9" fill="#333"/><g fill="none" stroke="#333" stroke-width="1.9"><rect x="1004.05" y="48.05" width="5.7" height="5.7" rx="0.4"/><rect x="1013.15" y="48.05" width="5.7" height="5.7" rx="0.4"/><rect x="1004.05" y="57.15" width="5.7" height="5.7" rx="0.4"/></g><g fill="#333"><rect x="1006.3" y="50.3" width="1.4" height="1.4"/><rect x="1015.4" y="50.3" width="1.4" height="1.4"/><rect x="1006.3" y="59.4" width="1.4" height="1.4"/><rect x="1013.1" y="57.2" width="1.7" height="2.3"/><rect x="1018.2" y="57.2" width="1.7" height="1.6"/><rect x="1015.1" y="60.3" width="1.7" height="1.6"/><rect x="1018.2" y="60.2" width="1.7" height="1.2"/><rect x="1013.1" y="62.2" width="1.7" height="1.7"/><rect x="1017.2" y="61.9" width="2.7" height="2"/></g><path d="M23 148 L28.4 153 L23 158 M29.2 148 L34.6 153 L29.2 158" fill="none" stroke="#333" stroke-width="1.8" stroke-linecap="round" stroke-linejoin="round"/><rect x="22.3" y="182.1" width="13.8" height="13.8" rx="1.6" fill="none" stroke="#333" stroke-width="1.8"/><path d="M30.5 182.1 L27 195.9 M29 189.4 H36.1" stroke="#333" stroke-width="1.6"/><path d="M26.6 249.7 A5.2 5.2 0 1 1 32.8 255.6" fill="none" stroke="#1677ff" stroke-width="2.2"/><rect x="22.2" y="249.8" width="10.6" height="10.2" rx="1.6" fill="none" stroke="#1677ff" stroke-width="2.2"/><rect x="22.1" y="309.9" width="14" height="14" rx="1.8" fill="none" stroke="#333" stroke-width="1.8"/><path d="M25.8 315.6 V314 H32.2 V315.6 M29 314 V320 M27 320 H31" fill="none" stroke="#333" stroke-width="1.6" stroke-linecap="round"/><rect x="22.1" y="373.9" width="14" height="14" rx="1.8" fill="none" stroke="#333" stroke-width="1.8"/><path d="M22.1 379 Q28.5 380 31.2 388 M31 385 Q33 382 36.1 381.4" fill="none" stroke="#333" stroke-width="1.6"/><circle cx="32.4" cy="377.5" r="1.3" fill="#333"/><rect x="22.1" y="437.9" width="14" height="14" rx="1.8" fill="none" stroke="#333" stroke-width="1.8"/><path d="M28.9 441.6 L32.9 444.5 L31.4 448.5 H26.4 L24.9 444.5 Z" fill="none" stroke="#333" stroke-width="1.5" stroke-linejoin="round"/><path d="M28.9 516.5 A7.7 7.7 0 1 1 36.6 508.8 Z" fill="none" stroke="#333" stroke-width="1.6" stroke-linejoin="round"/><path d="M29.1 516.2 Q27.8 509.2 36.4 509" fill="none" stroke="#333" stroke-width="1.5"/><circle cx="26.2" cy="506.4" r="1" fill="#333"/><circle cx="31.7" cy="506.4" r="1" fill="#333"/><path d="M25.6 510.6 Q27 512.6 29 512.8" fill="none" stroke="#333" stroke-width="1.4" stroke-linecap="round"/><path d="M21.5 565.3 V580.2 H37" fill="none" stroke="#333" stroke-width="1.6"/><path d="M24 573.8 L27.9 569.8 L32 573.8 L36 569.8" fill="none" stroke="#333" stroke-width="1.7" stroke-linejoin="round"/><path d="M22.2 633.1 H25.2 A2.4 2.4 0 1 1 29.6 633.1 H32.8 V636.2 A2.4 2.4 0 1 1 32.8 640.6 V643.5 H22.2 V641 A2.6 2.6 0 0 0 22.2 635.8 Z" fill="none" stroke="#333" stroke-width="1.6" stroke-linejoin="round"/><circle cx="575.8" cy="220.3" r="44.7" fill="#fff" stroke="#2b2f66" stroke-width="1"/><circle cx="575.8" cy="220.3" r="41" fill="#d6d6d6"/><circle cx="575.8" cy="204.00" r="14.7" fill="#878787"/><path d="M547.20 245.80 A28.6 25.4 0 0 1 604.40 245.80 Z" fill="#878787"/><circle cx="739.2" cy="220.2" r="44.7" fill="#fff" stroke="#2b2f66" stroke-width="1"/><circle cx="739.2" cy="220.2" r="41" fill="#d6d6d6"/><circle cx="739.2" cy="203.90" r="14.7" fill="#878787"/><path d="M710.60 245.70 A28.6 25.4 0 0 1 767.80 245.70 Z" fill="#878787"/><circle cx="575.7" cy="371.9" r="44.7" fill="#fff" stroke="#2b2f66" stroke-width="1"/><circle cx="575.7" cy="371.9" r="41" fill="#d6d6d6"/><circle cx="575.7" cy="355.60" r="14.7" fill="#878787"/><path d="M547.10 397.40 A28.6 25.4 0 0 1 604.30 397.40 Z" fill="#878787"/><circle cx="739.2" cy="371.9" r="44.7" fill="#fff" stroke="#2b2f66" stroke-width="1"/><circle cx="739.2" cy="371.9" r="41" fill="#d6d6d6"/><circle cx="739.2" cy="355.60" r="14.7" fill="#878787"/><path d="M710.60 397.40 A28.6 25.4 0 0 1 767.80 397.40 Z" fill="#878787"/><circle cx="660.9" cy="505.8" r="44.7" fill="#fff" stroke="#2b2f66" stroke-width="1"/><circle cx="660.9" cy="505.8" r="41" fill="#d6d6d6"/><circle cx="660.9" cy="489.50" r="14.7" fill="#878787"/><path d="M632.30 531.30 A28.6 25.4 0 0 1 689.50 531.30 Z" fill="#878787"/><circle cx="856.2" cy="505.8" r="44.7" fill="#fff" stroke="#2b2f66" stroke-width="1"/><circle cx="856.2" cy="505.8" r="41" fill="#d6d6d6"/><circle cx="856.2" cy="489.50" r="14.7" fill="#878787"/><path d="M827.60 531.30 A28.6 25.4 0 0 1 884.80 531.30 Z" fill="#878787"/><path d="M620.6 220.5 H689.5 M575.6 265.2 V321.5 M739.6 265 V321.5 M620.4 372.2 H689.5 M660.5 378 V413.4 M811.2 506.5 H711" fill="none" stroke="#111" stroke-width="1.1"/><path d="M694.6 220.5 L688.6 217.8 V223.2Z M575.6 327.2 L572.9 321 H578.3Z M739.6 327.2 L736.9 321 H742.3Z M694.6 372.2 L688.6 369.5 V374.9Z M705.6 506.5 L711.6 503.8 V509.2Z" fill="#111"/><circle cx="660.5" cy="372.4" r="4.8" fill="#fff" stroke="#d0021b" stroke-width="1.4"/><circle cx="660.5" cy="372.4" r="2.6" fill="#d0021b"/><rect x="658" y="377.4" width="5" height="1.4" fill="#222"/><path d="M656 417.8 L660.5 413.3 L665 417.8" fill="none" stroke="#1e90ff" stroke-width="1.1"/></svg>
<div class="a" style="left:1133px;top:133px;width:1px;height:533px;background:#e6e6ea;"></div>
<div class="a" style="left:1134px;top:165px;width:33.5px;height:35px;background:#067bff;"></div>
<div class="a" style="left:58px;top:650px;width:1075px;height:16px;background:#fff;"></div>
<div class="a" style="left:93.20px;top:651.5px;width:9.3px;height:13.2px;border-radius:3px;background:#a8111f;"></div>
<div class="a" style="left:104.64px;top:651.5px;width:9.3px;height:13.2px;border-radius:3px;background:#c8102e;"></div>
<div class="a" style="left:116.08px;top:651.5px;width:9.3px;height:13.2px;border-radius:3px;background:#e2405c;"></div>
<div class="a" style="left:127.52px;top:651.5px;width:9.3px;height:13.2px;border-radius:3px;background:#f26383;"></div>
<div class="a" style="left:138.96px;top:651.5px;width:9.3px;height:13.2px;border-radius:3px;background:#f69eae;"></div>
<div class="a" style="left:150.40px;top:651.5px;width:9.3px;height:13.2px;border-radius:3px;background:#257a8c;"></div>
<div class="a" style="left:161.84px;top:651.5px;width:9.3px;height:13.2px;border-radius:3px;background:#32a2bf;"></div>
<div class="a" style="left:173.28px;top:651.5px;width:9.3px;height:13.2px;border-radius:3px;background:#40bddb;"></div>
<div class="a" style="left:184.72px;top:651.5px;width:9.3px;height:13.2px;border-radius:3px;background:#5dd5ee;"></div>
<div class="a" style="left:196.16px;top:651.5px;width:9.3px;height:13.2px;border-radius:3px;background:#a6ecfa;"></div>
<div class="a" style="left:207.60px;top:651.5px;width:9.3px;height:13.2px;border-radius:3px;background:#ef5124;"></div>
<div class="a" style="left:219.04px;top:651.5px;width:9.3px;height:13.2px;border-radius:3px;background:#fd7b37;"></div>
<div class="a" style="left:230.48px;top:651.5px;width:9.3px;height:13.2px;border-radius:3px;background:#fd9420;"></div>
<div class="a" style="left:241.92px;top:651.5px;width:9.3px;height:13.2px;border-radius:3px;background:#ffb412;"></div>
<div class="a" style="left:253.36px;top:651.5px;width:9.3px;height:13.2px;border-radius:3px;background:#ffc454;"></div>
<div class="a" style="left:264.80px;top:651.5px;width:9.3px;height:13.2px;border-radius:3px;background:#10917b;"></div>
<div class="a" style="left:276.24px;top:651.5px;width:9.3px;height:13.2px;border-radius:3px;background:#14ae97;"></div>
<div class="a" style="left:287.68px;top:651.5px;width:9.3px;height:13.2px;border-radius:3px;background:#19c8b0;"></div>
<div class="a" style="left:299.12px;top:651.5px;width:9.3px;height:13.2px;border-radius:3px;background:#69d8c8;"></div>
<div class="a" style="left:310.56px;top:651.5px;width:9.3px;height:13.2px;border-radius:3px;background:#86e9dc;"></div>
<div class="a" style="left:322.00px;top:651.5px;width:9.3px;height:13.2px;border-radius:3px;background:#982d61;"></div>
<div class="a" style="left:333.44px;top:651.5px;width:9.3px;height:13.2px;border-radius:3px;background:#c44f8e;"></div>
<div class="a" style="left:344.88px;top:651.5px;width:9.3px;height:13.2px;border-radius:3px;background:#e06aa7;"></div>
<div class="a" style="left:356.32px;top:651.5px;width:9.3px;height:13.2px;border-radius:3px;background:#f78bc9;"></div>
<div class="a" style="left:367.76px;top:651.5px;width:9.3px;height:13.2px;border-radius:3px;background:#f2c3da;"></div>
<div class="a" style="left:379.20px;top:651.5px;width:9.3px;height:13.2px;border-radius:3px;background:#5b8a16;"></div>
<div class="a" style="left:390.64px;top:651.5px;width:9.3px;height:13.2px;border-radius:3px;background:#72a12a;"></div>
<div class="a" style="left:402.08px;top:651.5px;width:9.3px;height:13.2px;border-radius:3px;background:#96b822;"></div>
<div class="a" style="left:413.52px;top:651.5px;width:9.3px;height:13.2px;border-radius:3px;background:#b0ce49;"></div>
<div class="a" style="left:424.96px;top:651.5px;width:9.3px;height:13.2px;border-radius:3px;background:#d2e190;"></div>
<div class="a" style="left:436.40px;top:651.5px;width:9.3px;height:13.2px;border-radius:3px;background:#1f25a8;"></div>
<div class="a" style="left:447.84px;top:651.5px;width:9.3px;height:13.2px;border-radius:3px;background:#2f47d6;"></div>
<div class="a" style="left:459.28px;top:651.5px;width:9.3px;height:13.2px;border-radius:3px;background:#6344ee;"></div>
<div class="a" style="left:470.72px;top:651.5px;width:9.3px;height:13.2px;border-radius:3px;background:#8a72f6;"></div>
<div class="a" style="left:482.16px;top:651.5px;width:9.3px;height:13.2px;border-radius:3px;background:#a993f6;"></div>
<div class="a" style="left:493.60px;top:651.5px;width:9.3px;height:13.2px;border-radius:3px;background:#ffc200;"></div>
<div class="a" style="left:505.04px;top:651.5px;width:9.3px;height:13.2px;border-radius:3px;background:#ffdb2c;"></div>
<div class="a" style="left:516.48px;top:651.5px;width:9.3px;height:13.2px;border-radius:3px;background:#f1e22c;"></div>
<div class="a" style="left:527.92px;top:651.5px;width:9.3px;height:13.2px;border-radius:3px;background:#f9f24e;"></div>
<div class="a" style="left:539.36px;top:651.5px;width:9.3px;height:13.2px;border-radius:3px;background:#fdfd82;"></div>
<div class="a" style="left:550.80px;top:651.5px;width:9.3px;height:13.2px;border-radius:3px;background:#9252d9;"></div>
<div class="a" style="left:562.24px;top:651.5px;width:9.3px;height:13.2px;border-radius:3px;background:#c252e2;"></div>
<div class="a" style="left:573.68px;top:651.5px;width:9.3px;height:13.2px;border-radius:3px;background:#d173f3;"></div>
<div class="a" style="left:585.12px;top:651.5px;width:9.3px;height:13.2px;border-radius:3px;background:#b98af8;"></div>
<div class="a" style="left:596.56px;top:651.5px;width:9.3px;height:13.2px;border-radius:3px;background:#d9a3f8;"></div>
<div class="a" style="left:608.00px;top:651.5px;width:9.3px;height:13.2px;border-radius:3px;background:#287a41;"></div>
<div class="a" style="left:619.44px;top:651.5px;width:9.3px;height:13.2px;border-radius:3px;background:#389a58;"></div>
<div class="a" style="left:630.88px;top:651.5px;width:9.3px;height:13.2px;border-radius:3px;background:#4aab72;"></div>
<div class="a" style="left:642.32px;top:651.5px;width:9.3px;height:13.2px;border-radius:3px;background:#5bb984;"></div>
<div class="a" style="left:653.76px;top:651.5px;width:9.3px;height:13.2px;border-radius:3px;background:#91d8a8;"></div>
<div class="a" style="left:665.20px;top:651.5px;width:9.3px;height:13.2px;border-radius:3px;background:#e13b2b;"></div>
<div class="a" style="left:676.64px;top:651.5px;width:9.3px;height:13.2px;border-radius:3px;background:#f8483a;"></div>
<div class="a" style="left:688.08px;top:651.5px;width:9.3px;height:13.2px;border-radius:3px;background:#f76268;"></div>
<div class="a" style="left:699.52px;top:651.5px;width:9.3px;height:13.2px;border-radius:3px;background:#f97a7a;"></div>
<div class="a" style="left:710.96px;top:651.5px;width:9.3px;height:13.2px;border-radius:3px;background:#f8928a;"></div>
<div class="a" style="left:722.40px;top:651.5px;width:9.3px;height:13.2px;border-radius:3px;background:#2042a0;"></div>
<div class="a" style="left:733.84px;top:651.5px;width:9.3px;height:13.2px;border-radius:3px;background:#3154c9;"></div>
<div class="a" style="left:745.28px;top:651.5px;width:9.3px;height:13.2px;border-radius:3px;background:#3a6ff0;"></div>
<div class="a" style="left:756.72px;top:651.5px;width:9.3px;height:13.2px;border-radius:3px;background:#5f8ef8;"></div>
<div class="a" style="left:768.16px;top:651.5px;width:9.3px;height:13.2px;border-radius:3px;background:#89b1f2;"></div>
<div class="a" style="left:779.60px;top:651.5px;width:9.3px;height:13.2px;border-radius:3px;background:#7a3109;"></div>
<div class="a" style="left:791.04px;top:651.5px;width:9.3px;height:13.2px;border-radius:3px;background:#994212;"></div>
<div class="a" style="left:802.48px;top:651.5px;width:9.3px;height:13.2px;border-radius:3px;background:#b04a2f;"></div>
<div class="a" style="left:813.92px;top:651.5px;width:9.3px;height:13.2px;border-radius:3px;background:#d06243;"></div>
<div class="a" style="left:825.36px;top:651.5px;width:9.3px;height:13.2px;border-radius:3px;background:#e87a5a;"></div>
<div class="a" style="left:836.80px;top:651.5px;width:9.3px;height:13.2px;border-radius:3px;background:#1989d8;"></div>
<div class="a" style="left:848.24px;top:651.5px;width:9.3px;height:13.2px;border-radius:3px;background:#2899ef;"></div>
<div class="a" style="left:859.68px;top:651.5px;width:9.3px;height:13.2px;border-radius:3px;background:#42aff8;"></div>
<div class="a" style="left:871.12px;top:651.5px;width:9.3px;height:13.2px;border-radius:3px;background:#38cff8;"></div>
<div class="a" style="left:882.56px;top:651.5px;width:9.3px;height:13.2px;border-radius:3px;background:#63e0f9;"></div>
<div class="a" style="left:894.00px;top:651.5px;width:9.3px;height:13.2px;border-radius:3px;background:#7c5239;"></div>
<div class="a" style="left:905.44px;top:651.5px;width:9.3px;height:13.2px;border-radius:3px;background:#99644a;"></div>
<div class="a" style="left:916.88px;top:651.5px;width:9.3px;height:13.2px;border-radius:3px;background:#b27253;"></div>
<div class="a" style="left:928.32px;top:651.5px;width:9.3px;height:13.2px;border-radius:3px;background:#d1835b;"></div>
<div class="a" style="left:939.76px;top:651.5px;width:9.3px;height:13.2px;border-radius:3px;background:#f89a6a;"></div>
<div class="a" style="left:951.20px;top:651.5px;width:9.3px;height:13.2px;border-radius:3px;background:#7b7068;"></div>
<div class="a" style="left:962.64px;top:651.5px;width:9.3px;height:13.2px;border-radius:3px;background:#a8a190;"></div>
<div class="a" style="left:974.08px;top:651.5px;width:9.3px;height:13.2px;border-radius:3px;background:#c8c8b0;"></div>
<div class="a" style="left:985.52px;top:651.5px;width:9.3px;height:13.2px;border-radius:3px;background:#e0dcc8;"></div>
<div class="a" style="left:996.96px;top:651.5px;width:9.3px;height:13.2px;border-radius:3px;background:#f1eddb;"></div>
<div class="a" style="left:1008.40px;top:651.5px;width:9.3px;height:13.2px;border-radius:3px;background:#1a1a1a;"></div>
<div class="a" style="left:1019.84px;top:651.5px;width:9.3px;height:13.2px;border-radius:3px;background:#303030;"></div>
<div class="a" style="left:1031.28px;top:651.5px;width:9.3px;height:13.2px;border-radius:3px;background:#414141;"></div>
<div class="a" style="left:1042.72px;top:651.5px;width:9.3px;height:13.2px;border-radius:3px;background:#585858;"></div>
<div class="a" style="left:1054.16px;top:651.5px;width:9.3px;height:13.2px;border-radius:3px;background:#787878;"></div>
<div class="a" style="left:1065.60px;top:651.5px;width:9.3px;height:13.2px;border-radius:3px;background:#b0b0b0;"></div>
<div class="a" style="left:1077.04px;top:651.5px;width:9.3px;height:13.2px;border-radius:3px;background:#c6c6c6;"></div>
<div class="a" style="left:1088.48px;top:651.5px;width:9.3px;height:13.2px;border-radius:3px;background:#d6d6d6;"></div>
<div class="a" style="left:1099.92px;top:651.5px;width:9.3px;height:13.2px;border-radius:3px;background:#e6e6e6;"></div>
<div class="a" style="left:1111.36px;top:651.5px;width:9.3px;height:13.2px;border-radius:3px;background:#f0f0f0;"></div>
<div class="a" style="left:1122.80px;top:651.5px;width:9.3px;height:13.2px;border-radius:3px;background:#ffffff;"></div>
<div class="a" style="left:2px;top:666px;width:1165px;height:31px;background:#f2f3f8;border-radius:0 0 7px 7px;"></div>
<div class="a" style="left:49px;top:671px;width:1px;height:22px;background:#dcdde2;"></div>
<div class="a" style="left:178px;top:671px;width:1px;height:22px;background:#dcdde2;"></div>
<div class="a" style="left:219px;top:671px;width:1px;height:22px;background:#dcdde2;"></div>
<div class="a" style="left:292px;top:671px;width:1px;height:22px;background:#dcdde2;"></div>
<div class="a" style="left:536px;top:671px;width:1px;height:22px;background:#dcdde2;"></div>
<div class="a" style="left:627px;top:671px;width:1px;height:22px;background:#dcdde2;"></div>
<div class="a" style="left:714px;top:671px;width:1px;height:22px;background:#dcdde2;"></div>
<div class="a" style="left:859px;top:671px;width:1px;height:22px;background:#dcdde2;"></div>
<div class="a" style="left:1087px;top:671px;width:1px;height:22px;background:#dcdde2;"></div>
<div class="l" style="left:66.00px;top:675.50px;font-size:14px;color:#333;font-weight:normal;">頁-1</div>
<div class="l" style="left:243.00px;top:675.20px;font-size:14px;color:#1677ff;font-weight:bold;">頁-1</div>
<div class="l" style="left:545.00px;top:676.00px;font-size:12px;color:#333;font-weight:normal;">形狀數量：10</div>
<div class="l" style="left:636.00px;top:676.00px;font-size:12px;color:#333;font-weight:normal;">形狀ID：232</div>
<div class="l" style="left:793.00px;top:675.80px;font-size:13px;color:#333;font-weight:normal;">專注</div>
<div class="a" style="left:891.6px;top:680.2px;width:96px;height:3px;border-radius:2px;background:#fff;"></div>
<div class="a" style="left:891.6px;top:680.2px;width:21px;height:3px;border-radius:2px;background:#333;"></div>
<div class="l" style="left:1032.00px;top:676.00px;font-size:12.5px;color:#333;font-weight:normal;">81%</div>
<div class="a" style="left:1013px;top:578px;width:89px;height:40px;border-radius:20px;background:#fff;box-shadow:0 2px 10px rgba(0,0,0,0.10);"></div>
<div class="a" style="left:1057px;top:586px;width:1px;height:24px;background:#e6e6ea;"></div>
<div class="a" style="left:94.5px;top:421.5px;width:703px;height:67px;border-radius:8px;background:#fff;box-shadow:0 2px 10px rgba(0,0,0,0.12);"></div>
<div class="a" style="left:142px;top:429px;width:1px;height:52px;background:#ececec;"></div>
<div class="a" style="left:243px;top:429px;width:1px;height:52px;background:#ececec;"></div>
<div class="a" style="left:422px;top:429px;width:1px;height:52px;background:#ececec;"></div>
<div class="a" style="left:730px;top:429px;width:1px;height:52px;background:#ececec;"></div>
<div class="t" style="left:57.60px;top:466.50px;font-size:11px;color:#222;font-weight:normal;">AI</div>
<div class="t" style="left:109.00px;top:466.50px;font-size:11px;color:#222;font-weight:normal;">文本</div>
<div class="t" style="left:158.50px;top:466.50px;font-size:11px;color:#222;font-weight:normal;">格式刷</div>
<div class="t" style="left:226.00px;top:466.50px;font-size:11px;color:#222;font-weight:normal;">起始箭頭</div>
<div class="t" style="left:322.00px;top:466.50px;font-size:11px;color:#222;font-weight:normal;">終點箭頭</div>
<div class="t" style="left:398.40px;top:466.50px;font-size:11px;color:#222;font-weight:normal;">連接器類型</div>
<div class="t" style="left:455.80px;top:466.50px;font-size:11px;color:#222;font-weight:normal;">線條顏色</div>
<div class="t" style="left:501.60px;top:466.50px;font-size:11px;color:#222;font-weight:normal;">粗細</div>
<div class="t" style="left:541.90px;top:466.50px;font-size:11px;color:#222;font-weight:normal;">虛線</div>
<div class="t" style="left:588.10px;top:466.50px;font-size:11px;color:#222;font-weight:normal;">流動動畫</div>
<div class="t" style="left:640.20px;top:466.50px;font-size:11px;color:#222;font-weight:normal;">手繪樣式</div>
<div class="t" style="left:696.90px;top:466.50px;font-size:11px;color:#222;font-weight:normal;">更多</div>
<div class="a" style="left:254px;top:433px;width:64px;height:24px;border:1px solid #e6e6e8;border-radius:6px;"></div>
<div class="a" style="left:350px;top:433px;width:64px;height:24px;border:1px solid #e6e6e8;border-radius:6px;"></div>
<div class="l" style="left:287.40px;top:440.60px;font-size:14px;color:#222;font-weight:normal;">00</div>
<div class="l" style="left:383.80px;top:440.60px;font-size:14px;color:#222;font-weight:normal;">04</div>
<svg class="s" width="1169" height="699" style="left:0;top:0"><defs><linearGradient id="g1" x1="0" y1="0" x2="1" y2="0"><stop offset="0" stop-color="#9038ff"/><stop offset="1" stop-color="#3a6bff"/></linearGradient><linearGradient id="g2" x1="0" y1="0" x2="1" y2="0"><stop offset="0" stop-color="#9a52f5"/><stop offset="1" stop-color="#5b6bff"/></linearGradient></defs>
<path d="M117.00 437.90 C118.13 442.60 120.40 444.87 125.10 446.00 C120.40 447.13 118.13 449.40 117.00 454.10 C115.87 449.40 113.60 447.13 108.90 446.00 C113.60 444.87 115.87 442.60 117.00 437.90 Z" fill="url(#g1)"/>
<path d="M124.00 435.60 C124.38 437.68 125.12 438.42 127.20 438.80 C125.12 439.18 124.38 439.92 124.00 442.00 C123.62 439.92 122.88 439.18 120.80 438.80 C122.88 438.42 123.62 437.68 124.00 435.60 Z" fill="#2f7bff"/>
<path d="M1077.80 590.00 C1078.95 594.76 1081.24 597.05 1086.00 598.20 C1081.24 599.35 1078.95 601.64 1077.80 606.40 C1076.65 601.64 1074.36 599.35 1069.60 598.20 C1074.36 597.05 1076.65 594.76 1077.80 590.00 Z" fill="url(#g1)"/>
<path d="M1084.40 588.40 C1084.78 590.48 1085.52 591.22 1087.60 591.60 C1085.52 591.98 1084.78 592.72 1084.40 594.80 C1084.02 592.72 1083.28 591.98 1081.20 591.60 C1083.28 591.22 1084.02 590.48 1084.40 588.40 Z" fill="#2f7bff"/>
<linearGradient id="g3" gradientUnits="userSpaceOnUse" x1="0" y1="589.8" x2="0" y2="606"><stop offset="0" stop-color="#8a45ff"/><stop offset="1" stop-color="#4d6cff"/></linearGradient>
<g transform="rotate(-40 1036.4 598.2)"><rect x="1033.8" y="590" width="5.2" height="16" rx="1.3" fill="none" stroke="url(#g3)" stroke-width="1.9"/><path d="M1033.8 594.6 H1039" stroke="url(#g3)" stroke-width="1.9"/></g>
<path d="M1043.10 590.90 C1043.56 592.88 1044.42 593.74 1046.40 594.20 C1044.42 594.66 1043.56 595.52 1043.10 597.50 C1042.64 595.52 1041.78 594.66 1039.80 594.20 C1041.78 593.74 1042.64 592.88 1043.10 590.90 Z" fill="#3b7bff"/>
<path d="M1037.60 587.80 C1037.91 589.12 1038.48 589.69 1039.80 590.00 C1038.48 590.31 1037.91 590.88 1037.60 592.20 C1037.29 590.88 1036.72 590.31 1035.40 590.00 C1036.72 589.69 1037.29 589.12 1037.60 587.80 Z" fill="#6a5cff"/>
<path d="M1030.10 597.50 C1030.42 598.88 1031.02 599.48 1032.40 599.80 C1031.02 600.12 1030.42 600.72 1030.10 602.10 C1029.78 600.72 1029.18 600.12 1027.80 599.80 C1029.18 599.48 1029.78 598.88 1030.10 597.50 Z" fill="#9a4dff"/>
</svg>
<div class="a" style="left:189px;top:418px;width:611px;height:74px;border:4px solid #f84c4f;border-radius:3px;"></div>
<svg class="s" width="1169" height="699"><path d="M1158.4 143.6 L1153 149 L1158.4 154.4 M1152.2 143.6 L1146.8 149 L1152.2 154.4" fill="none" stroke="#333" stroke-width="1.8" stroke-linecap="round" stroke-linejoin="round"/><path d="M1149.6 172.4 L1152 175.6" stroke="#fff" stroke-width="2" stroke-linecap="round"/><path d="M1151.8 177.2 L1159.2 183 L1151.6 190 L1144.4 183 Z" fill="none" stroke="#fff" stroke-width="2" stroke-linejoin="round"/><path d="M1145 183.2 Q1151.8 185.4 1158.6 183.2 L1151.6 189.6 Z" fill="#fff"/><path d="M1159.5 186 Q1161 188 1161 188.9 A1.5 1.5 0 0 1 1158 188.9 Q1158 188 1159.5 186Z" fill="#fff"/><path d="M1144.8 218.8 H1156 L1159.4 222.2 V234.8 H1144.8 Z" fill="none" stroke="#333" stroke-width="1.7" stroke-linejoin="round"/><path d="M1156 218.8 V222.2 H1159.4" fill="#333" stroke="#333" stroke-width="1"/><path d="M1147 225.8 H1148.4 M1150.2 225.8 H1157 M1147 230 H1148.4 M1150.2 230 H1157" stroke="#333" stroke-width="1.6"/><circle cx="1152" cy="271.9" r="8.2" fill="none" stroke="#333" stroke-width="1.7"/><path d="M1149.2 269.6 A2.8 2.8 0 1 1 1153.6 271.8 Q1152 272.8 1152 274.4" fill="none" stroke="#333" stroke-width="1.7" stroke-linecap="round"/><circle cx="1152" cy="276.9" r="1.05" fill="#333"/><path d="M1160.20 649.80 L1160.16 650.16 L1160.06 650.51 L1159.88 650.85 L1159.63 651.16 L1159.31 651.44 L1158.79 651.65 L1158.28 651.81 L1157.94 652.00 L1157.65 652.18 L1157.42 652.37 L1157.23 652.57 L1157.08 652.79 L1156.96 653.03 L1156.89 653.29 L1156.84 653.59 L1156.82 653.93 L1156.83 654.32 L1156.95 654.85 L1157.03 655.40 L1156.95 655.82 L1156.80 656.19 L1156.60 656.51 L1156.34 656.78 L1156.05 656.99 L1155.72 657.14 L1155.36 657.22 L1154.98 657.24 L1154.59 657.18 L1154.18 657.04 L1153.75 656.69 L1153.35 656.33 L1153.02 656.13 L1152.71 655.97 L1152.43 655.86 L1152.16 655.80 L1151.90 655.78 L1151.64 655.80 L1151.37 655.86 L1151.09 655.97 L1150.78 656.13 L1150.45 656.33 L1150.05 656.69 L1149.62 657.04 L1149.21 657.18 L1148.82 657.24 L1148.44 657.22 L1148.08 657.14 L1147.75 656.99 L1147.46 656.78 L1147.20 656.51 L1147.00 656.19 L1146.85 655.82 L1146.77 655.40 L1146.85 654.85 L1146.97 654.32 L1146.98 653.93 L1146.96 653.59 L1146.91 653.29 L1146.84 653.03 L1146.72 652.79 L1146.57 652.57 L1146.38 652.37 L1146.15 652.18 L1145.86 652.00 L1145.52 651.81 L1145.01 651.65 L1144.49 651.44 L1144.17 651.16 L1143.92 650.85 L1143.74 650.51 L1143.64 650.16 L1143.60 649.80 L1143.64 649.44 L1143.74 649.09 L1143.92 648.75 L1144.17 648.44 L1144.49 648.16 L1145.01 647.95 L1145.52 647.79 L1145.86 647.60 L1146.15 647.42 L1146.38 647.23 L1146.57 647.03 L1146.72 646.81 L1146.84 646.57 L1146.91 646.31 L1146.96 646.01 L1146.98 645.67 L1146.97 645.28 L1146.85 644.75 L1146.77 644.20 L1146.85 643.78 L1147.00 643.41 L1147.20 643.09 L1147.46 642.82 L1147.75 642.61 L1148.08 642.46 L1148.44 642.38 L1148.82 642.36 L1149.21 642.42 L1149.62 642.56 L1150.05 642.91 L1150.45 643.27 L1150.78 643.47 L1151.09 643.63 L1151.37 643.74 L1151.64 643.80 L1151.90 643.82 L1152.16 643.80 L1152.43 643.74 L1152.71 643.63 L1153.02 643.47 L1153.35 643.27 L1153.75 642.91 L1154.18 642.56 L1154.59 642.42 L1154.98 642.36 L1155.36 642.38 L1155.72 642.46 L1156.05 642.61 L1156.34 642.82 L1156.60 643.09 L1156.80 643.41 L1156.95 643.78 L1157.03 644.20 L1156.95 644.75 L1156.83 645.28 L1156.82 645.67 L1156.84 646.01 L1156.89 646.31 L1156.96 646.57 L1157.08 646.81 L1157.23 647.03 L1157.42 647.23 L1157.65 647.42 L1157.94 647.60 L1158.28 647.79 L1158.79 647.95 L1159.31 648.16 L1159.63 648.44 L1159.88 648.75 L1160.06 649.09 L1160.16 649.44Z" fill="none" stroke="#333" stroke-width="1.7" stroke-linejoin="round"/><circle cx="1151.9" cy="649.8" r="2.8" fill="none" stroke="#333" stroke-width="1.7"/><path d="M73 652.2 L75 654.4" stroke="#333" stroke-width="1.6" stroke-linecap="round"/><path d="M74.6 654.6 L80.2 659.2 L75.2 663.8 L70.6 658.9 Z" fill="none" stroke="#333" stroke-width="1.6" stroke-linejoin="round"/><path d="M71.2 659.4 Q75.5 660.4 79.6 659.4 L75.2 663.6Z" fill="#333"/><circle cx="81" cy="662.6" r="1.2" fill="#333"/><path d="M83 657 H87.9 L85.45 659.9Z" fill="#777"/><path d="M20.4 677 V686.6 M37 677 V686.6" stroke="#333" stroke-width="1.3"/><rect x="23.4" y="677.4" width="10.6" height="8.8" fill="none" stroke="#333" stroke-width="1.3"/><path d="M159 679.2 H165.2 L162.1 682.6Z" fill="#777"/><path d="M199.5 676.2 V686.8 M194.2 681.5 H204.8" stroke="#333" stroke-width="1.3"/><path d="M734.8 676.4 L743 680.4 L734.8 684.4 L726.6 680.4 Z" fill="none" stroke="#333" stroke-width="1.3" stroke-linejoin="round"/><path d="M726.8 683.4 L734.8 687.4 L742.8 683.4" fill="none" stroke="#333" stroke-width="1.3" stroke-linejoin="round"/><path d="M749 680.2 H753.4 L751.2 682.6Z" fill="#777"/><path d="M770.6 679.6 V676.6 H773.6 M780.6 676.6 H783.6 V679.6 M783.6 684.6 V687.6 H780.6 M773.6 687.6 H770.6 V684.6" fill="none" stroke="#333" stroke-width="1.3"/><rect x="774" y="679.6" width="6" height="5" fill="none" stroke="#333" stroke-width="1.3"/><circle cx="839.1" cy="682.3" r="7.4" fill="none" stroke="#333" stroke-width="1.3"/><path d="M837 678.6 L842 682.3 L837 686 Z" fill="none" stroke="#333" stroke-width="1.3" stroke-linejoin="round"/><path d="M870 681.8 H881.2 M999 682 H1010.4 M1004.7 676.4 V687.6" stroke="#333" stroke-width="1.3"/><circle cx="913" cy="681.7" r="5" fill="#fff" stroke="#333" stroke-width="2.2"/><path d="M1070 681 H1075.2 L1072.6 684Z" fill="#888"/><path d="M1100.5 677.4 L1105.6 676.2 L1110.6 677.4 L1115.8 676.2 V686.8 L1110.6 688 L1105.6 686.8 L1100.5 688 Z M1105.6 676.2 V686.8 M1110.6 677.4 V688" fill="none" stroke="#333" stroke-width="1.3" stroke-linejoin="round"/><path d="M1133.4 679.6 V676.4 H1136.6 M1144 676.4 H1147.2 V679.6 M1147.2 684.8 V688 H1144 M1136.6 688 H1133.4 V684.8" fill="none" stroke="#333" stroke-width="1.3"/><rect x="1136.8" y="679.8" width="7" height="4.8" fill="none" stroke="#333" stroke-width="1.3"/><path d="M260.4 445.3 H284" stroke="#111" stroke-width="1.3"/><path d="M306 442 H312 L309 445.3Z M402 442 H408 L405 445.3Z" fill="#888"/><path d="M356.2 445.3 H377" stroke="#111" stroke-width="1.3"/><path d="M381.4 445.3 L376.4 442.6 V448Z" fill="#111"/><path d="M328.4 443 H339.6 L336 439.6 M339.6 447.2 H328.4 L332 450.6" fill="none" stroke="#333" stroke-width="1.6" stroke-linejoin="round"/></svg>
<svg class="s" width="1169" height="699"><path d="M160.8 441.8 V439.4 A2.6 2.6 0 0 1 163.4 436.8 H174.6 A2.6 2.6 0 0 1 177.2 439.4 V441.8 M169 436.8 V452.6 M164.4 452.6 H173.8" fill="none" stroke="#333" stroke-width="1.8" stroke-linecap="round"/><path d="M210 444.2 Q214.4 442.8 217.6 438.8 L224.8 445 L218.8 452.2 Z" fill="none" stroke="#333" stroke-width="1.8" stroke-linejoin="round"/><path d="M217.6 439.4 L224.4 445.2" stroke="#333" stroke-width="3"/><path d="M221.2 441.6 L224.2 438.4" stroke="#333" stroke-width="2.6" stroke-linecap="round"/><circle cx="224.4" cy="438" r="1.9" fill="#333"/><circle cx="451.1" cy="437.8" r="1.3" fill="#333"/><path d="M453.2 438.9 H457.9 V452 H462.4" fill="none" stroke="#333" stroke-width="2"/><circle cx="464.5" cy="452.3" r="1.3" fill="#333"/><path d="M522 438.2 L514 446.2" stroke="#3a3a3a" stroke-width="3.2" stroke-linecap="round"/><path d="M513.2 445.2 L514.9 446.9 Q512.6 450.6 509.2 450.8 Q509.6 447.4 513.2 445.2Z" fill="#8a8a8a"/><path d="M508.2 452.8 H524.6" stroke="#333" stroke-width="1.8"/><path d="M554 438.5 H570.2" stroke="#333" stroke-width="1.1"/><path d="M554 444.3 H570.2" stroke="#333" stroke-width="1.8"/><path d="M554 450.4 H570.2" stroke="#333" stroke-width="2.8"/><path d="M594 438.8 H597.6 M599.4 438.8 H603.4 M605.2 438.8 H609.2" stroke="#333" stroke-width="1.6"/><path d="M594 444.7 H596.6 M598.2 444.7 H600.8 M602.4 444.7 H605 M606.6 444.7 H609.2" stroke="#333" stroke-width="1.6"/><path d="M594 450.8 H609.4" stroke="#333" stroke-width="1.4" stroke-dasharray="1.2 1.6"/><circle cx="640.2" cy="444.7" r="0.75" fill="#333"/><path d="M642 442.9 L644.8 444.7 L642 446.5Z M650 435.9 L652 437.8 L650 439.7Z M650 449.7 L652 451.6 L650 453.5Z" fill="#333"/><path d="M648.6 437.6 Q646.8 437.8 646.8 440 V449.4 Q646.8 451.6 648.6 451.8 M645 444.7 H646.8" fill="none" stroke="#333" stroke-width="1.5"/><path d="M653.2 437.8 H656.6 M653.2 451.7 H656.6" stroke="#333" stroke-width="1.6"/><g transform="translate(701.9 442.1) rotate(-45)" fill="none" stroke="#333" stroke-width="1.5" stroke-linejoin="round"><path d="M-6.9 0 L-4.2 -1.9 H5.2 A1.9 1.9 0 0 1 5.2 1.9 H-4.2 Z M3.4 -1.9 V1.9"/></g><path d="M694 446.3 Q690.4 447.8 691.8 450.2 Q693.2 451.8 699.4 450.7 Q706.4 449.4 707.6 450.4 Q708.8 452.2 702.8 453.4" fill="none" stroke="#333" stroke-width="1.6" stroke-linecap="round"/><circle cx="756.9" cy="444.9" r="9.1" fill="none" stroke="#333" stroke-width="1.7"/><circle cx="756.9" cy="439.7" r="1.35" fill="#333"/><circle cx="756.9" cy="444.9" r="1.35" fill="#333"/><circle cx="756.9" cy="450.1" r="1.35" fill="#333"/><g transform="translate(786.6 433) rotate(45)" fill="#333"><rect x="-2.6" y="-5.4" width="5.2" height="1.4" rx="0.4"/><path d="M-1.6 -4.2 H1.6 L3.2 0.8 H-3.2 Z"/><rect x="-3.4" y="0.4" width="6.8" height="1.3" rx="0.4"/><path d="M-0.6 1.6 H0.6 V6.2 H-0.6Z"/></g><path d="M785.9 448.4 V450.2 M785.9 454 V455.8 M785.9 460 V461.8" stroke="#c8c8c8" stroke-width="1.8"/><path d="M782.2 475.3 H785.6 V472 M788.3 481.6 V478.5 H791.9" fill="none" stroke="#666" stroke-width="1"/></svg>
</body></html>
